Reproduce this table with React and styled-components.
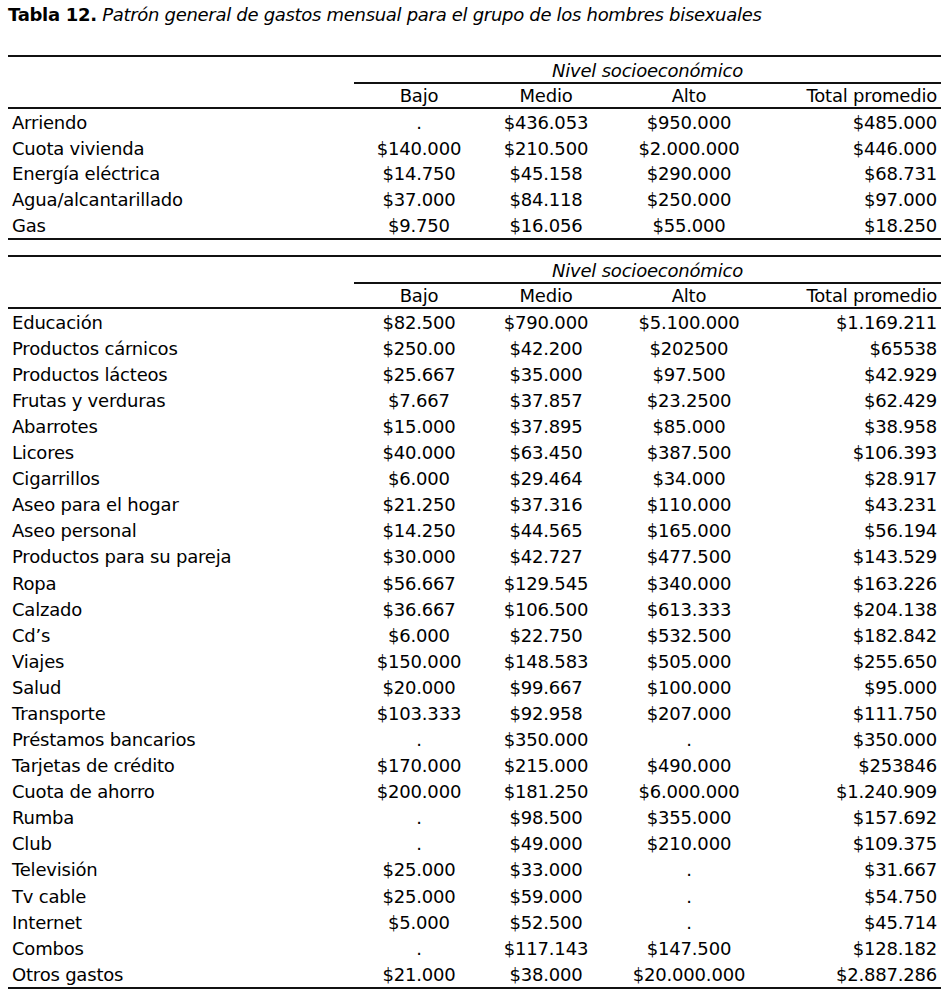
import React from "react";
import styled, { createGlobalStyle } from "styled-components";

const GlobalStyle = createGlobalStyle`
  body {
    margin: 0;
    background: #fff;
    color: #000;
    font-family: "DejaVu Sans", Verdana, sans-serif;
  }
`;

const Page = styled.main`
  width: 944px;
  padding: 3px 0 0 8px;
  box-sizing: border-box;
`;

const Caption = styled.h1`
  margin: 0 0 28px 0;
  font-size: 18px;
  font-weight: normal;
  line-height: 24px;
  letter-spacing: -0.3px;
  white-space: nowrap;
`;

const Label = styled.b`
  font-weight: bold;
`;

const Title = styled.i`
  font-style: italic;
`;

const Table = styled.section`
  width: 933px;
  border-top: 2px solid #111;
  border-bottom: 2px solid #111;
  margin-bottom: ${p => (p.$gap ? "15px" : "0")};
  font-size: 18px;
  letter-spacing: -0.2px;
`;

const Row = styled.div`
  display: grid;
  grid-template-columns: 346px 130px 124px 162px 171px;
  align-items: center;
  height: ${p => p.$h}px;
  box-sizing: border-box;
  border-bottom: ${p => (p.$rule ? "2px solid #111" : "none")};
  line-height: 22px;
  white-space: nowrap;
`;

const Cell = styled.div`
  text-align: ${p => p.$align || "center"};
  padding: 2px 4px 0;
`;

const GroupCell = styled.div`
  grid-column: 2 / 6;
  align-self: stretch;
  display: flex;
  align-items: center;
  justify-content: center;
  padding-top: 3px;
  font-style: italic;
  border-bottom: 2px solid #111;
`;

const housing = [
  ["Arriendo", ".", "$436.053", "$950.000", "$485.000"],
  ["Cuota vivienda", "$140.000", "$210.500", "$2.000.000", "$446.000"],
  ["Energía eléctrica", "$14.750", "$45.158", "$290.000", "$68.731"],
  ["Agua/alcantarillado", "$37.000", "$84.118", "$250.000", "$97.000"],
  ["Gas", "$9.750", "$16.056", "$55.000", "$18.250"]
];

const expenses = [
  ["Educación", "$82.500", "$790.000", "$5.100.000", "$1.169.211"],
  ["Productos cárnicos", "$250.00", "$42.200", "$202500", "$65538"],
  ["Productos lácteos", "$25.667", "$35.000", "$97.500", "$42.929"],
  ["Frutas y verduras", "$7.667", "$37.857", "$23.2500", "$62.429"],
  ["Abarrotes", "$15.000", "$37.895", "$85.000", "$38.958"],
  ["Licores", "$40.000", "$63.450", "$387.500", "$106.393"],
  ["Cigarrillos", "$6.000", "$29.464", "$34.000", "$28.917"],
  ["Aseo para el hogar", "$21.250", "$37.316", "$110.000", "$43.231"],
  ["Aseo personal", "$14.250", "$44.565", "$165.000", "$56.194"],
  ["Productos para su pareja", "$30.000", "$42.727", "$477.500", "$143.529"],
  ["Ropa", "$56.667", "$129.545", "$340.000", "$163.226"],
  ["Calzado", "$36.667", "$106.500", "$613.333", "$204.138"],
  ["Cd’s", "$6.000", "$22.750", "$532.500", "$182.842"],
  ["Viajes", "$150.000", "$148.583", "$505.000", "$255.650"],
  ["Salud", "$20.000", "$99.667", "$100.000", "$95.000"],
  ["Transporte", "$103.333", "$92.958", "$207.000", "$111.750"],
  ["Préstamos bancarios", ".", "$350.000", ".", "$350.000"],
  ["Tarjetas de crédito", "$170.000", "$215.000", "$490.000", "$253846"],
  ["Cuota de ahorro", "$200.000", "$181.250", "$6.000.000", "$1.240.909"],
  ["Rumba", ".", "$98.500", "$355.000", "$157.692"],
  ["Club", ".", "$49.000", "$210.000", "$109.375"],
  ["Televisión", "$25.000", "$33.000", ".", "$31.667"],
  ["Tv cable", "$25.000", "$59.000", ".", "$54.750"],
  ["Internet", "$5.000", "$52.500", ".", "$45.714"],
  ["Combos", ".", "$117.143", "$147.500", "$128.182"],
  ["Otros gastos", "$21.000", "$38.000", "$20.000.000", "$2.887.286"]
];

function ExpenseTable({ rows, rowHeight, gap }) {
  return (
    <Table $gap={gap}>
      <Row $h={26}>
        <Cell />
        <GroupCell>Nivel socioeconómico</GroupCell>
      </Row>
      <Row $h={26} $rule>
        <Cell />
        <Cell>Bajo</Cell>
        <Cell>Medio</Cell>
        <Cell>Alto</Cell>
        <Cell $align="right">Total promedio</Cell>
      </Row>
      {rows.map(r => (
        <Row key={r[0]} $h={rowHeight}>
          <Cell $align="left">{r[0]}</Cell>
          <Cell>{r[1]}</Cell>
          <Cell>{r[2]}</Cell>
          <Cell>{r[3]}</Cell>
          <Cell $align="right">{r[4]}</Cell>
        </Row>
      ))}
    </Table>
  );
}

export default function App() {
  return (
    <Page>
      <GlobalStyle />
      <Caption>
        <Label>Tabla 12.</Label>{" "}
        <Title>Patrón general de gastos mensual para el grupo de los hombres bisexuales</Title>
      </Caption>
      <ExpenseTable rows={housing} rowHeight={25.75} gap />
      <ExpenseTable rows={expenses} rowHeight={26.08} />
    </Page>
  );
}
